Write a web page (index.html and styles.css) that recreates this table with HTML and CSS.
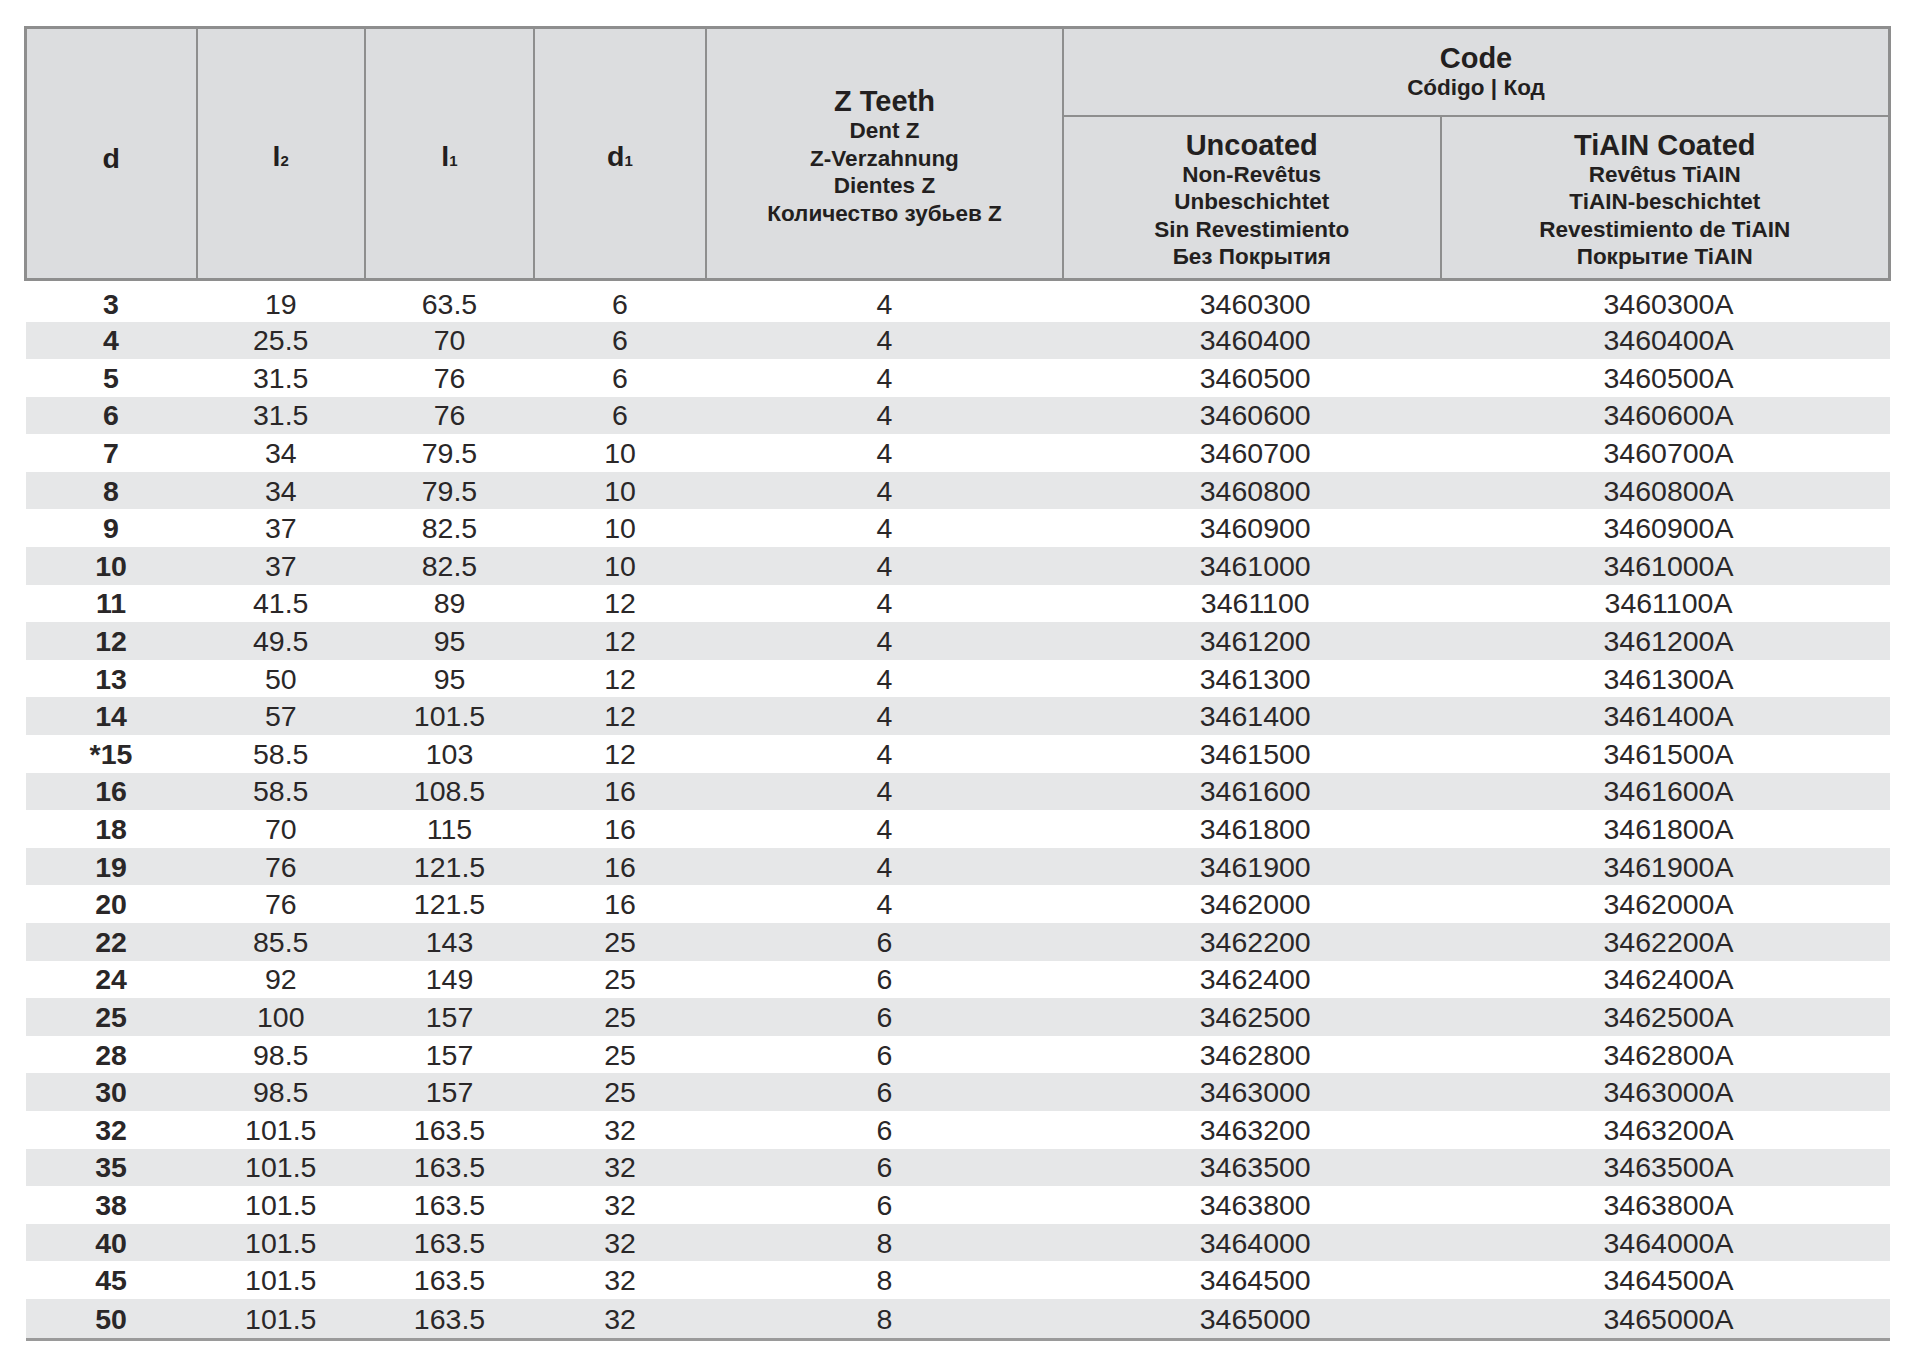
FILE: index.html
```html
<!DOCTYPE html>
<html lang="en">
<head>
<meta charset="utf-8">
<title>Product table</title>
<link rel="stylesheet" href="styles.css">
</head>
<body>
<table class="spec">
  <colgroup>
    <col class="c1"><col class="c2"><col class="c3"><col class="c4"><col class="c5"><col class="c6"><col class="c7">
  </colgroup>
  <thead>
    <tr class="h1">
      <th rowspan="2" class="sym">d</th>
      <th rowspan="2" class="sym">l<span class="sub">2</span></th>
      <th rowspan="2" class="sym">l<span class="sub">1</span></th>
      <th rowspan="2" class="sym">d<span class="sub">1</span></th>
      <th rowspan="2" class="multi tall">
        <div class="hl">Z Teeth</div>
        <div class="sl">Dent Z</div>
        <div class="sl">Z-Verzahnung</div>
        <div class="sl">Dientes Z</div>
        <div class="sl">Количество зубьев Z</div>
      </th>
      <th colspan="2" class="multi">
        <div class="hl">Code</div>
        <div class="sl">Código | Код</div>
      </th>
    </tr>
    <tr class="h2">
      <th class="multi tall">
        <div class="hl">Uncoated</div>
        <div class="sl">Non-Revêtus</div>
        <div class="sl">Unbeschichtet</div>
        <div class="sl">Sin Revestimiento</div>
        <div class="sl">Без Покрытия</div>
      </th>
      <th class="multi tall">
        <div class="hl">TiAIN Coated</div>
        <div class="sl">Revêtus TiAIN</div>
        <div class="sl">TiAIN-beschichtet</div>
        <div class="sl">Revestimiento de TiAIN</div>
        <div class="sl">Покрытие TiAIN</div>
      </th>
    </tr>
  </thead>
  <tbody>
    <tr><td class="b">3</td><td>19</td><td>63.5</td><td>6</td><td>4</td><td class="code">3460300</td><td class="code">3460300A</td></tr>
    <tr><td class="b">4</td><td>25.5</td><td>70</td><td>6</td><td>4</td><td class="code">3460400</td><td class="code">3460400A</td></tr>
    <tr><td class="b">5</td><td>31.5</td><td>76</td><td>6</td><td>4</td><td class="code">3460500</td><td class="code">3460500A</td></tr>
    <tr><td class="b">6</td><td>31.5</td><td>76</td><td>6</td><td>4</td><td class="code">3460600</td><td class="code">3460600A</td></tr>
    <tr><td class="b">7</td><td>34</td><td>79.5</td><td>10</td><td>4</td><td class="code">3460700</td><td class="code">3460700A</td></tr>
    <tr><td class="b">8</td><td>34</td><td>79.5</td><td>10</td><td>4</td><td class="code">3460800</td><td class="code">3460800A</td></tr>
    <tr><td class="b">9</td><td>37</td><td>82.5</td><td>10</td><td>4</td><td class="code">3460900</td><td class="code">3460900A</td></tr>
    <tr><td class="b">10</td><td>37</td><td>82.5</td><td>10</td><td>4</td><td class="code">3461000</td><td class="code">3461000A</td></tr>
    <tr><td class="b">11</td><td>41.5</td><td>89</td><td>12</td><td>4</td><td class="code">3461100</td><td class="code">3461100A</td></tr>
    <tr><td class="b">12</td><td>49.5</td><td>95</td><td>12</td><td>4</td><td class="code">3461200</td><td class="code">3461200A</td></tr>
    <tr><td class="b">13</td><td>50</td><td>95</td><td>12</td><td>4</td><td class="code">3461300</td><td class="code">3461300A</td></tr>
    <tr><td class="b">14</td><td>57</td><td>101.5</td><td>12</td><td>4</td><td class="code">3461400</td><td class="code">3461400A</td></tr>
    <tr><td class="b">*15</td><td>58.5</td><td>103</td><td>12</td><td>4</td><td class="code">3461500</td><td class="code">3461500A</td></tr>
    <tr><td class="b">16</td><td>58.5</td><td>108.5</td><td>16</td><td>4</td><td class="code">3461600</td><td class="code">3461600A</td></tr>
    <tr><td class="b">18</td><td>70</td><td>115</td><td>16</td><td>4</td><td class="code">3461800</td><td class="code">3461800A</td></tr>
    <tr><td class="b">19</td><td>76</td><td>121.5</td><td>16</td><td>4</td><td class="code">3461900</td><td class="code">3461900A</td></tr>
    <tr><td class="b">20</td><td>76</td><td>121.5</td><td>16</td><td>4</td><td class="code">3462000</td><td class="code">3462000A</td></tr>
    <tr><td class="b">22</td><td>85.5</td><td>143</td><td>25</td><td>6</td><td class="code">3462200</td><td class="code">3462200A</td></tr>
    <tr><td class="b">24</td><td>92</td><td>149</td><td>25</td><td>6</td><td class="code">3462400</td><td class="code">3462400A</td></tr>
    <tr><td class="b">25</td><td>100</td><td>157</td><td>25</td><td>6</td><td class="code">3462500</td><td class="code">3462500A</td></tr>
    <tr><td class="b">28</td><td>98.5</td><td>157</td><td>25</td><td>6</td><td class="code">3462800</td><td class="code">3462800A</td></tr>
    <tr><td class="b">30</td><td>98.5</td><td>157</td><td>25</td><td>6</td><td class="code">3463000</td><td class="code">3463000A</td></tr>
    <tr><td class="b">32</td><td>101.5</td><td>163.5</td><td>32</td><td>6</td><td class="code">3463200</td><td class="code">3463200A</td></tr>
    <tr><td class="b">35</td><td>101.5</td><td>163.5</td><td>32</td><td>6</td><td class="code">3463500</td><td class="code">3463500A</td></tr>
    <tr><td class="b">38</td><td>101.5</td><td>163.5</td><td>32</td><td>6</td><td class="code">3463800</td><td class="code">3463800A</td></tr>
    <tr><td class="b">40</td><td>101.5</td><td>163.5</td><td>32</td><td>8</td><td class="code">3464000</td><td class="code">3464000A</td></tr>
    <tr><td class="b">45</td><td>101.5</td><td>163.5</td><td>32</td><td>8</td><td class="code">3464500</td><td class="code">3464500A</td></tr>
    <tr><td class="b">50</td><td>101.5</td><td>163.5</td><td>32</td><td>8</td><td class="code">3465000</td><td class="code">3465000A</td></tr>
  </tbody>
</table>
</body>
</html>
```

FILE: styles.css
```css
html, body {
  margin: 0;
  padding: 0;
  background: #ffffff;
}

body {
  padding: 26px 0 0 24px;
  font-family: "Liberation Sans", Arial, sans-serif;
  color: #231f20;
}

.spec {
  border-collapse: collapse;
  table-layout: fixed;
  width: 1864px;
}

.c1 { width: 171px; }
.c2 { width: 168.5px; }
.c3 { width: 169px; }
.c4 { width: 172px; }
.c5 { width: 357px; }
.c6 { width: 377.5px; }
.c7 { width: 449px; }

.spec th {
  background: #dcdddf;
  border: 2px solid #8e8e8e;
  padding: 0;
  text-align: center;
  vertical-align: middle;
  font-weight: 700;
  color: #231f20;
}

.spec thead tr.h1 th {
  border-top-width: 3px;
}

.spec thead tr.h1 th:first-child {
  border-left-width: 3px;
}

.spec thead tr.h1 th:last-child,
.spec thead tr.h2 th:last-child {
  border-right-width: 3px;
}

.spec thead th[rowspan],
.spec thead tr.h2 th {
  border-bottom-width: 3px;
}

.h1 { height: 88px; }
.h2 { height: 164px; }

.spec th.sym {
  font-size: 28.5px;
  line-height: 30px;
  padding-top: 9px;
}

.spec th.tall {
  padding-top: 5px;
}

.sub {
  font-size: 15px;
}

.hl {
  font-size: 29px;
  line-height: 32px;
}

.sl {
  font-size: 22.5px;
  line-height: 27.5px;
}

.spec tbody tr {
  height: 37.6px;
}

.spec tbody tr:first-child {
  height: 42px;
}

.spec tbody tr:first-child td {
  padding-top: 5px;
}

.spec tbody tr:last-child {
  height: 41px;
}

.spec tbody tr:last-child td {
  border-bottom: 3px solid #9a9a9a;
}

.spec tbody tr:nth-child(even) {
  background: #e6e7e8;
}

.spec td {
  padding: 0;
  text-align: center;
  vertical-align: middle;
  font-size: 28.5px;
  line-height: 32px;
  color: #2a2728;
}

.spec td.code {
  padding-left: 7px;
}

.spec td.b {
  font-weight: 700;
}
```
